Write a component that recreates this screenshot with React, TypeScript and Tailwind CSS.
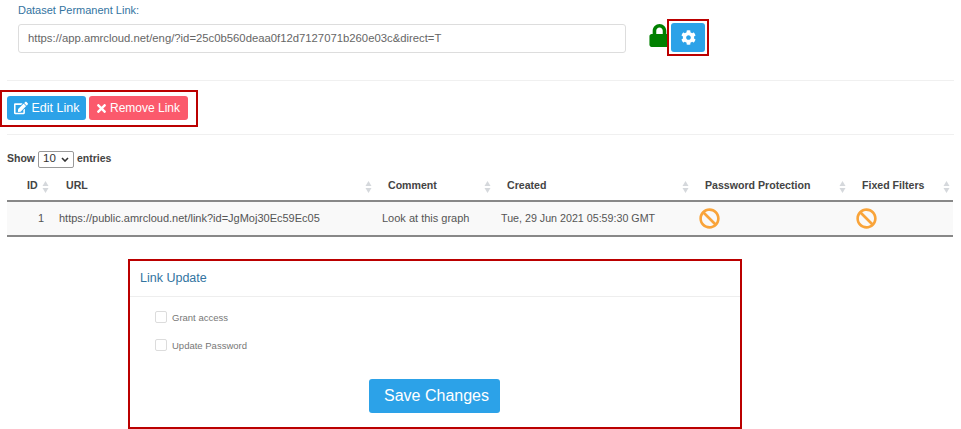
import React from 'react';
import { FaBan, FaCog, FaEdit, FaLock, FaTimes } from 'react-icons/fa';

const SortIcon = () => (
  <svg width="7" height="12" viewBox="0 0 7 12" className="absolute right-[3px] top-[5px]" fill="#d5d8dc">
    <path d="M3.5 0 L6.5 5 H0.5 Z" />
    <path d="M3.5 12 L6.5 7 H0.5 Z" />
  </svg>
);

const columns = [
  { label: 'ID', className: 'w-[45px] pl-[20px]' },
  { label: 'URL', className: 'w-[323px] pl-[14px]' },
  { label: 'Comment', className: 'w-[119px] pl-[13px]' },
  { label: 'Created', className: 'w-[198px] pl-[13px]' },
  { label: 'Password Protection', className: 'w-[157px] pl-[13px]' },
  { label: 'Fixed Filters', className: 'w-[104px] pl-[13px]' },
];

const NoIcon = () => <FaBan className="text-[21px] text-[#f9a43a]" />;

const Checkbox = ({ label }: { label: string }) => (
  <label className="flex items-center gap-[5px] h-[13px] text-[9.5px] text-[#777]">
    <span className="-mt-[4px] w-[12px] h-[12px] rounded-[2px] border border-[#dcdcdc] bg-white" />
    {label}
  </label>
);

export default function App() {
  return (
    <div className="w-[961px] h-[429px] bg-white overflow-hidden font-['Liberation_Sans',Arial,sans-serif] text-[#555]">
      <div className="pl-[18px] pt-[4px]">
        <div className="h-[14px] leading-[13px] text-[11px] text-[#33749f]">Dataset Permanent Link:</div>
        <div className="flex items-start mt-[1px]">
          <div className="w-[608px] h-[29px] mt-[5px] flex items-center pl-[9px] border border-[#dddddd] rounded-[3px] text-[11.3px] text-[#666]">
            https://app.amrcloud.net/eng/?id=25c0b560deaa0f12d7127071b260e03c&amp;direct=T
          </div>
          <FaLock className="ml-[22px] mt-[5px] text-[23px] text-[#008000] shrink-0" />
          <div className="-ml-[4px] w-[42px] h-[37px] border-2 border-[#bb0000] flex items-center justify-center bg-white z-10">
            <button className="w-[34px] h-[29px] bg-[#2ca2e8] rounded-[3px] flex items-center justify-center text-white">
              <FaCog className="text-[15px]" />
            </button>
          </div>
        </div>
      </div>

      <div className="mx-[7px] mt-[24px] h-px bg-[#f0f0f0]" />

      <div className="mt-[9px] w-[198px] h-[37px] border-2 border-[#bb0000] pl-[5px] pt-[4px] flex gap-[3px]">
        <button className="w-[79px] h-[24px] bg-[#2ca2e8] rounded-[3px] flex items-center justify-center gap-[4px] text-white text-[12.5px]">
          <FaEdit className="text-[14px]" />
          Edit Link
        </button>
        <button className="w-[99px] h-[24px] bg-[#fb5a6c] rounded-[3px] flex items-center justify-center gap-[2px] pr-[2px] text-white text-[12px]">
          <FaTimes className="text-[13px]" />
          Remove Link
        </button>
      </div>

      <div className="mx-[7px] mt-[7px] h-px bg-[#f0f0f0]" />

      <div className="mx-[7px] mt-[15px] h-[18px] flex items-center gap-[3px] text-[10.5px] font-bold text-[#444]">
        Show
        <span className="w-[36px] h-[17px] border border-[#999] rounded-[2px] flex items-center justify-between px-[4px] text-[11.5px] font-normal text-[#333]">
          10
          <svg width="8" height="5" viewBox="0 0 8 5" fill="none" stroke="#333" strokeWidth="1.6">
            <path d="M1 1 L4 4 L7 1" />
          </svg>
        </span>
        entries
      </div>

      <table className="ml-[7px] mt-[8px] w-[946px] table-fixed border-collapse">
        <thead>
          <tr className="h-[25px] border-b-2 border-[#888] text-left text-[10.6px] text-[#444]">
            {columns.map((c) => (
              <th key={c.label} className={`relative font-bold p-0 pt-[2px] align-top ${c.className}`}>
                {c.label}
                <SortIcon />
              </th>
            ))}
          </tr>
        </thead>
        <tbody>
          <tr className="h-[35px] bg-[#f9f9f9] border-b-2 border-[#888] text-[11px] text-[#555]">
            <td className="p-0 pr-[8px] text-right">1</td>
            <td className="p-0 pl-[7px]">https://public.amrcloud.net/link?id=JgMoj30Ec59Ec05</td>
            <td className="p-0 pl-[7px]">Look at this graph</td>
            <td className="p-0 pl-[7px] text-[10.7px]">Tue, 29 Jun 2021 05:59:30 GMT</td>
            <td className="p-0 pl-[7px]"><NoIcon /></td>
            <td className="p-0 pl-[7px]"><NoIcon /></td>
          </tr>
        </tbody>
      </table>

      <div className="ml-[128px] mt-[22px] w-[614px] h-[170px] border-2 border-[#bb0000] flex flex-col">
        <div className="h-[36px] pl-[10px] flex items-center text-[12.5px] text-[#33749f] border-b border-[#eeeeee]">
          Link Update
        </div>
        <div className="pl-[25px] pt-[15px] flex flex-col gap-[15px]">
          <Checkbox label="Grant access" />
          <Checkbox label="Update Password" />
        </div>
        <div className="mt-[26px] flex justify-center pr-[2px]">
          <button className="w-[131px] h-[34px] pl-[5px] bg-[#2ca2e8] rounded-[3px] text-white text-[16px]">Save Changes</button>
        </div>
      </div>
    </div>
  );
}
